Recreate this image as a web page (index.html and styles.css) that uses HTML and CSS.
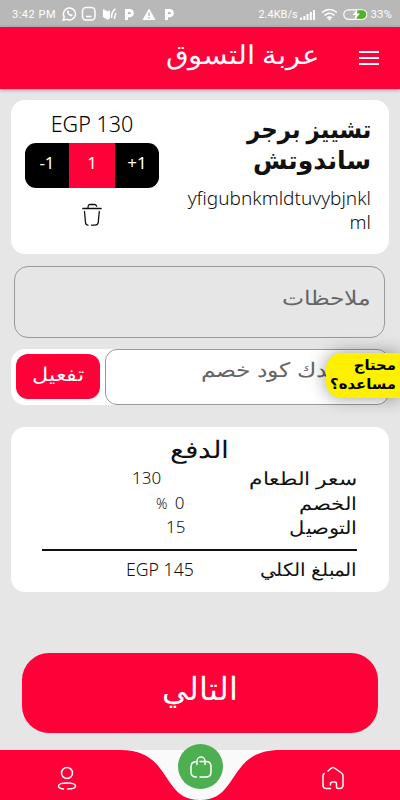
FILE: index.html
```html
<!DOCTYPE html>
<html lang="ar">
<head>
<meta charset="utf-8">
<title>عربة التسوق</title>
<link rel="stylesheet" href="styles.css">
</head>
<body>
<div class="screen">
  <div class="status">
    <span class="clock">3:42 PM</span>
    <svg class="notes" width="114" height="16" viewBox="0 0 114 16" fill="none" stroke="#fff" stroke-width="1.5">
      <path d="M1.2 14.2l1-3.4a6 6 0 1 1 2.4 2.4z"/><path d="M5 5c-.6 2.600 2.600 5.800 5 5.200l.6-1.500-1.500-.8-.9.700-1.600-1.600.7-.9-.8-1.700z" fill="#fff" stroke="none"/>
      <rect x="20.500" y="1.500" width="12.500" height="12.500" rx="3.500"/><path d="M24 10.500h5.500"/>
      <path d="M41 3l5 2.500v8.500l-5-3zM46 5.500l2-1.500v8l-2 2z" fill="#fff" stroke="none"/><path d="M49.500 12c0-4.500 1-7.500 4-9M52.500 13c0-2 .5-4 1.500-6"/>
      <path d="M64.500 14v-9.500h3.200a2.500 2.500 0 0 1 0 5.200h-3" stroke-width="3"/>
      <path d="M87 2.500l6.500 11.500h-13z" fill="#fff" stroke="none"/><path d="M87 6.500v3.500m0 1v1.500" stroke="#b8b8b8"/>
      <path d="M104.500 14v-9.500h3.200a2.500 2.500 0 0 1 0 5.200h-3" stroke-width="3"/>
    </svg>
    <span class="speed">2.4KB/s</span>
    <svg class="signals" width="68" height="16" viewBox="0 0 68 16" fill="none" stroke="#fff" stroke-width="1.600">
      <path d="M1 14v-2.500M4.300 14v-4M7.500 14v-6M10.800 14v-8M14 14v-10" stroke-width="2"/>
      <path d="M22 6.500q7.500-6 15 0M24.500 9.300q5-4 10 0M27 12q2.500-2 5 0"/><circle cx="29.500" cy="13" r="1.200" fill="#fff" stroke="none"/>
      <rect x="43.800" y="3.800" width="23" height="9.500" rx="4.700" stroke-width="1.200"/><path d="M57 4.300h5a4.200 4.200 0 0 1 0 8.500h-5z" fill="#4eb52a" stroke="none"/><path d="M57.500 3l-5 6h3l-1 5 5.500-6.500h-3z" fill="#fff" stroke="none"/>
    </svg>
    <span class="percent">33%</span>
  </div>
  <header class="appbar">
    <h1>عربة التسوق</h1>
    <svg width="22" height="16" viewBox="0 0 22 16" stroke="#fff" stroke-width="2"><path d="M1 2h20M1 8h20M1 14h20"/></svg>
  </header>
  <main>
    <section class="card item">
      <div class="buy">
        <div class="price">EGP 130</div>
        <div class="stepper"><span>-1</span><span class="count">1</span><span>+1</span></div>
        <svg class="trash" width="20" height="24" viewBox="0 0 20 24" fill="none" stroke="#111" stroke-width="1.300" stroke-linecap="round"><path d="M.8 5.500h18.400M6 4.500c0-2 .8-3 2-3h4.500c1 0 1.700.7 2.200 1.700M2.500 8.500l1 11c.2 1.700.9 2.700 2.500 2.700M9.500 22.200h3.500c2 0 3-.9 3.200-2.700l1.100-11"/></svg>
      </div>
      <div class="info">
        <h2><span class="narrow">تشييز برجر</span><span>ساندوتش</span></h2>
        <p>yfigubnkmldtuvybjnkl<br>ml</p>
      </div>
    </section>
    <div class="notesbox"><span class="wide">ملاحظات</span></div>
    <section class="coupon">
      <button class="activate"><span class="wide mid">تفعيل</span></button>
      <div class="code"><span class="wide">لو عندك كود خصم</span></div>
      <div class="help"><span>محتاج</span><span>مساعده؟</span></div>
    </section>
    <section class="card pay">
      <h3><span class="wide mid">الدفع</span></h3>
      <div class="line food"><span class="label">سعر الطعام</span><span class="num">130</span></div>
      <div class="line disc"><span class="label">الخصم</span><span class="num"><small>%</small> 0</span></div>
      <div class="line ship"><span class="label">التوصيل</span><span class="num">15</span></div>
      <div class="line total"><span class="label">المبلغ الكلي</span><span class="num">EGP 145</span></div>
    </section>
    <button class="next"><span>التالي</span></button>
  </main>
  <nav class="bottom">
    <svg class="wave" width="400" height="50" viewBox="0 0 400 50"><path fill="#fd0138" d="M0 0H120C173 0 160 50 200 50C240 50 227 0 280 0H400V50H0z"/></svg>
    <svg class="person" width="20" height="24" viewBox="0 0 20 24" fill="none" stroke="#fff" stroke-width="1.500" stroke-linecap="round"><circle cx="10" cy="7" r="5.500"/><path d="M6.500 23c-3-.2-5-1.100-5-3 0-2.300 4-3.100 8.500-3.100s8.500.8 8.500 3.100c0 2.200-3 3-8 3"/></svg>
    <div class="bag"><svg width="24" height="24" viewBox="0 0 24 24" fill="none" stroke="#fff" stroke-width="1.500" stroke-linecap="round"><path d="M8 9.500V6a4 4 0 0 1 8 0V9.500M11 6.500h6c3.500 0 5 1.500 5 5V17c0 3.500-1.500 5-5 5h-6M7.500 22C3.500 22 2 20.500 2 17v-5c0-3.500 1.500-5.500 6-5.500"/></svg></div>
    <svg class="home" width="24" height="24" viewBox="0 0 24 24" fill="none" stroke="#fff" stroke-width="1.500" stroke-linecap="round" stroke-linejoin="round"><path d="M7 5l3.500-3q1.500-1.200 3 0l7 5q1.500 1.200 1.500 3v9q0 3.500-3.500 3.500H17q-1.500 0-1.500-1.500v-3q0-2-2-2h-2q-2 0-2 2v1M9.500 22.500H5.300Q2 22.500 2 19v-9q0-1.800 1.300-2.500"/></svg>
  </nav>
</div>
</body>
</html>
```
FILE: styles.css
```css
* { box-sizing: border-box; }
body { margin: 0; font-family: "Noto Sans", "DejaVu Sans", sans-serif; }
h1, h2, h3, p { margin: 0; font-weight: 300; }
button { border: 0; padding: 0; font-family: inherit; }
svg { display: block; flex: none; }
span { white-space: nowrap; }
.screen { width: 400px; height: 800px; overflow: hidden; background: #e6e6e6; display: flex; flex-direction: column; }
.status { height: 27px; flex: none; background: #b8b8b8; color: #fff; display: flex; align-items: center; padding: 1px 8px 0 12px; font: 11px Roboto, sans-serif; }
.clock { width: 50px; letter-spacing: .5px; }
.speed { margin-left: auto; font-size: 11px; }
.signals { margin: 0 3px 0 2px; }
.percent { letter-spacing: .3px; }
.appbar { height: 62px; flex: none; background: #fd0138; color: #fff; display: flex; justify-content: flex-end; align-items: center; gap: 38px; padding: 0 20px 0 0; box-shadow: 0 1px 4px #0005; }
.appbar h1 { font-size: 26px; line-height: 36px; margin-bottom: 9px; transform: scaleX(1.125); transform-origin: right; }
main { height: 661px; flex: none; padding: 11px 11px 0; }
.card { background: #fff; border-radius: 14px; }
.wide { display: inline-block; transform: scaleX(1.175); transform-origin: right; }
.mid { transform-origin: center; }
.item { height: 154px; display: flex; justify-content: space-between; padding: 8px 18px 0 14px; }
.buy { width: 134px; display: flex; flex-direction: column; align-items: center; }
.price { font-size: 21.500px; line-height: 32px; font-weight: 300; }
.stepper { width: 134px; height: 45px; margin-top: 3px; border-radius: 11px; overflow: hidden; display: grid; grid-template-columns: 44px 46px 44px; background: #000; color: #fff; font-size: 17px; line-height: 40px; text-align: center; }
.count { background: #fd0138; }
.trash { margin-top: 15px; }
.info { text-align: right; color: #111; padding-top: 5px; }
.info h2 { font-size: 25px; line-height: 31px; font-weight: 700; direction: rtl; }
.info h2 span { display: block; }
.info .narrow { transform: scaleX(.915); transform-origin: right; }
.info p { font-size: 19px; line-height: 24px; margin-top: 11px; font-weight: 300; }
.notesbox { width: 371px; height: 72px; margin: 12px 0 0 3px; border: 1px solid #999; border-radius: 14px; direction: rtl; padding: 16px 13px; color: #666; font-size: 20px; line-height: 30px; font-weight: 300; }
.coupon { position: relative; height: 56px; width: 378px; margin-top: 11px; background: #fff; border-radius: 14px; display: flex; padding-left: 5px; }
.activate { width: 84px; height: 45px; margin: 5px 5px 0 0; border-radius: 12px; background: #fd0138; color: #fff; font-size: 19px; line-height: 36px; font-weight: 300; padding-bottom: 5px; }
.code { width: 284px; height: 56px; border: 1px solid #999; border-radius: 12px; direction: rtl; padding: 3px 13px; color: #666; font-size: 20px; line-height: 34px; font-weight: 300; }
.help { position: absolute; left: 315px; top: 4px; width: 74px; height: 45px; border-radius: 16px 0 0 16px; background: #fff000; box-shadow: 0 0 18px #0006; direction: rtl; padding: 2px 4px; color: #000; font-size: 14px; line-height: 19px; font-weight: 700; }
.help span { display: block; transform: scaleX(1.06); transform-origin: right; }
.pay { height: 165px; margin-top: 22px; padding: 4px 32px 0 31px; display: flex; flex-direction: column; color: #111; font-weight: 300; }
.pay h3 { font-size: 24px; line-height: 35px; text-align: center; direction: rtl; }
.line { display: flex; flex-direction: row-reverse; justify-content: space-between; font-size: 18px; line-height: 24px; height: 24px; }
.label { direction: rtl; transform: scaleX(1.17); transform-origin: right; }
.food .label { transform: scaleX(1.21); }
.total .label { transform: scaleX(1.12); }
.num { font-size: 17px; }
.num small { font-size: 14px; }
.food .num { margin-left: 90px; }
.disc .num { margin-left: 114px; word-spacing: 3px; }
.ship .num { margin-left: 124px; }
.disc, .ship { position: relative; top: 1px; }
.total { border-top: 2px solid #111; margin-top: 11px; padding-top: 6px; height: 32px; }
.total .num { margin-left: 84px; font-size: 17.700px; }
.next { display: block; width: 356px; height: 80px; margin: 61px 0 0 11px; border-radius: 27px; background: #fd0138; color: #fff; font-size: 32px; line-height: 66px; font-weight: 300; padding-bottom: 10px; }
.bottom { position: relative; height: 50px; flex: none; background: #fafafa; display: flex; justify-content: space-between; padding: 16px 55px 0 57px; }
.wave { position: absolute; left: 0; top: 0; }
.person, .home { position: relative; }
.bag { position: absolute; left: 178px; top: -6px; width: 45px; height: 45px; border-radius: 50%; background: #4caf50; display: grid; place-items: center; }
```
